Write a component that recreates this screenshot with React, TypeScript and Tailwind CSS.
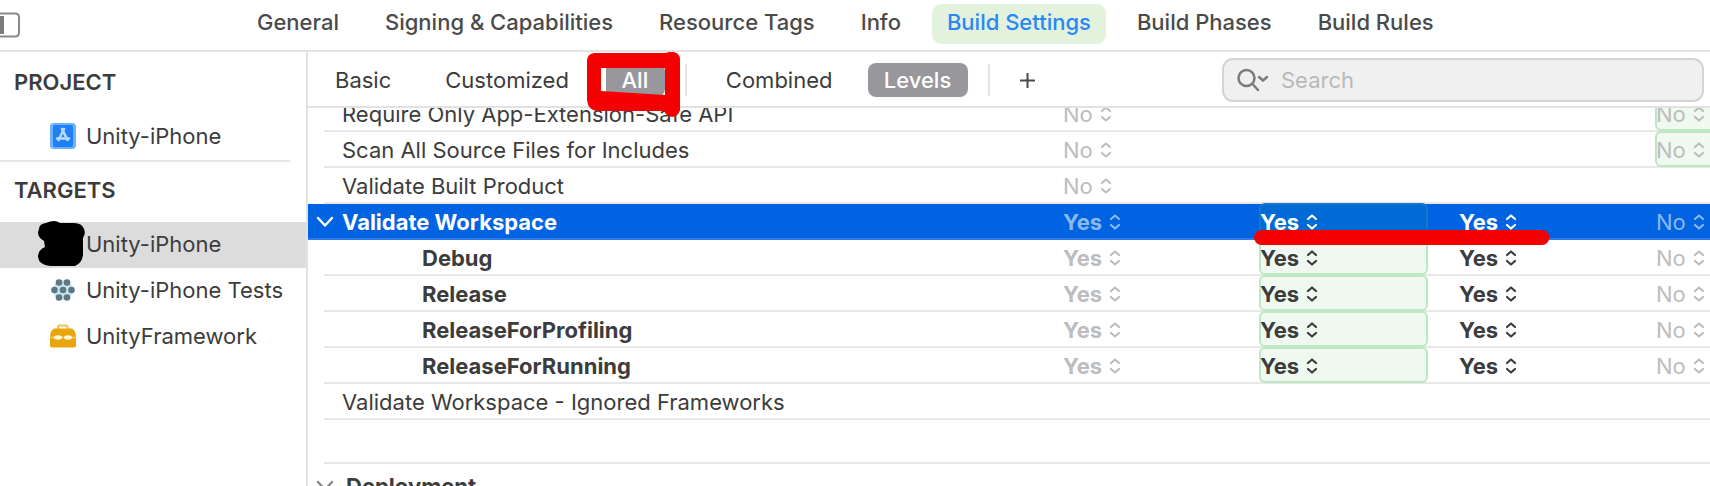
import { useState } from "react";
import clsx from "clsx";

const tabs = [
  "General",
  "Signing & Capabilities",
  "Resource Tags",
  "Info",
  "Build Settings",
  "Build Phases",
  "Build Rules",
];

type Row = {
  name: string;
  values: string[];
  kind?: "selected" | "child";
  // index of the column that has the green "resolved" box
  green?: number;
};

const rows: Row[] = [
  { name: "Require Only App-Extension-Safe API", values: ["No", "", "", "No"], green: 3 },
  { name: "Scan All Source Files for Includes", values: ["No", "", "", "No"], green: 3 },
  { name: "Validate Built Product", values: ["No", "", "", ""] },
  { name: "Validate Workspace", values: ["Yes", "Yes", "Yes", "No"], kind: "selected", green: 1 },
  { name: "Debug", values: ["Yes", "Yes", "Yes", "No"], kind: "child", green: 1 },
  { name: "Release", values: ["Yes", "Yes", "Yes", "No"], kind: "child", green: 1 },
  { name: "ReleaseForProfiling", values: ["Yes", "Yes", "Yes", "No"], kind: "child", green: 1 },
  { name: "ReleaseForRunning", values: ["Yes", "Yes", "Yes", "No"], kind: "child", green: 1 },
  { name: "Validate Workspace - Ignored Frameworks", values: ["", "", "", ""] },
];

const columns = ["Resolved", "Unity-iPhone target", "Unity-iPhone project", "iOS Default"];

function ChevronDown() {
  return (
    <svg width="18" height="12" viewBox="0 0 18 12" fill="none" stroke="currentColor" strokeWidth="2.4" strokeLinecap="round" strokeLinejoin="round">
      <path d="M2 2 L9 9.5 L16 2" />
    </svg>
  );
}

function ProjectIcon() {
  return (
    <svg className="shrink-0" width="28" height="28" viewBox="0 0 28 28" fill="none">
      <rect x="1" y="1" width="26" height="26" rx="4" fill="#6db0fb" />
      <rect x="4" y="3" width="20" height="22" rx="2" fill="#1f7ff5" />
      <g stroke="#b9d9ff" strokeWidth="2.6" strokeLinecap="round">
        <path d="M13 7 L18.500 18" />
        <path d="M15 7 L9.500 18" />
        <path d="M8 16.500 H20" />
      </g>
    </svg>
  );
}

function TestsIcon() {
  const dots = [
    [9, 4.5], [17, 4.5],
    [4.5, 12], [13, 12], [21.5, 12],
    [9, 19.5], [17, 19.5],
  ];
  return (
    <svg className="shrink-0" width="26" height="24" viewBox="0 0 26 24">
      <circle cx="13" cy="12" r="10" fill="#cfe3ec" />
      {dots.map(([cx, cy]) => (
        <circle key={`${cx}-${cy}`} cx={cx} cy={cy} r="3.3" fill="#5b7885" />
      ))}
    </svg>
  );
}

function FrameworkIcon() {
  return (
    <svg className="shrink-0" width="28" height="24" viewBox="0 0 28 24">
      <path d="M9 5 V3 Q9 1.500 10.500 1.500 H17 Q18.500 1.500 18.500 3 V5" fill="none" stroke="#f0c04d" strokeWidth="2" />
      <path d="M5 4.500 H23 Q26.500 6.500 27 12 V21.500 Q27 23.500 25 23.500 H3 Q1 23.500 1 21.500 V12 Q1.500 6.500 5 4.500 Z" fill="#e9a60c" />
      <path d="M1 13.500 H27" stroke="#f3cd6b" strokeWidth="1.500" />
      <ellipse cx="9" cy="13.500" rx="4" ry="2.200" fill="#fff6dc" />
      <ellipse cx="19" cy="13.500" rx="4" ry="2.200" fill="#fff6dc" />
    </svg>
  );
}

// App icon painted over with a black marker
function RedactedIcon() {
  return (
    <svg className="shrink-0" width="50" height="46" viewBox="0 0 50 46">
      <path
        d="M1 8 Q1 3 8 2 Q12 0 16 0 Q19 0 22 2 L36 2 Q44 2 46 8 Q48 13 45 17 L45 34 Q44 42 37 45 L12 45 Q1 44 0 36 Q0 29 7 26 L6 20 Q0 17 0 11 Z"
        fill="#000"
      />
    </svg>
  );
}

function Setting({ value, label, bold, color }: { value: string; label: string; bold: boolean; color: string }) {
  return (
    <div className={clsx("flex items-center gap-[7px]", color)}>
      <select
        aria-label={label}
        defaultValue={value}
        className={clsx("field-sizing-content appearance-none bg-transparent leading-7 outline-none", bold && "font-bold")}
      >
        <option>Yes</option>
        <option>No</option>
      </select>
      <svg className="pointer-events-none shrink-0" width="12" height="16" viewBox="0 0 12 16" fill="none" stroke="currentColor" strokeWidth="2.2" strokeLinecap="round" strokeLinejoin="round">
        <path d="M2 5 L6 1.500 L10 5" />
        <path d="M2 11 L6 14.500 L10 11" />
      </svg>
    </div>
  );
}

function SettingRow({ row }: { row: Row }) {
  const selected = row.kind === "selected";
  const bold = selected || row.kind === "child";
  const line = selected ? "border-b-2 border-[#2f7ae5]" : "border-b-2 border-[#e8e8e8]";

  return (
    <tr className={clsx("h-9", selected ? "bg-[#0063e1] text-white" : "text-[#3c3c3c]")}>
      <td className={clsx("p-0", selected && line)} />
      <th scope="row" className={clsx("p-0 text-left", line, bold ? "font-bold" : "font-normal")}>
        <div className={clsx("flex items-center whitespace-nowrap pt-0.5", row.kind === "child" ? "pl-[98px]" : !selected && "pl-[18px]")}>
          {selected && (
            <button aria-label="Collapse Validate Workspace" className="-ml-2 mr-2 shrink-0">
              <ChevronDown />
            </button>
          )}
          {row.name}
        </div>
      </th>
      {row.values.map((value, i) => {
        const faded = i === 0 || i === 3;
        const color = selected
          ? faded ? "text-[#8ab8f5]" : "text-white"
          : faded ? "text-[#bdbdbd]" : "text-[#3c3c3c]";
        const green = row.green === i;
        return (
          <td key={columns[i]} className={clsx("relative p-0", line)}>
            {value && (
              <div
                className={clsx(
                  "flex h-[34px] items-center pt-0.5",
                  green && "rounded-[5px] outline-2 -outline-offset-1",
                  green && i === 1 && "mr-8",
                  green && i === 3 && "-mr-2",
                  green && (selected ? "bg-[#006bd6] outline-[#1478c8]" : "bg-[#eff9f0] outline-[#bfe6c5]"),
                )}
              >
                <Setting value={value} label={`${row.name}, ${columns[i]}`} bold={bold && i !== 3} color={color} />
              </div>
            )}
            {selected && i === 1 && (
              <svg className="pointer-events-none absolute -left-[6px] top-[26px] z-10" width="296" height="15" viewBox="0 0 296 15">
                <path d="M7.500 7.500 H288" stroke="#f50000" strokeWidth="15" strokeLinecap="round" />
              </svg>
            )}
          </td>
        );
      })}
    </tr>
  );
}

function Target({ icon, name, selected }: { icon: React.ReactNode; name: string; selected?: boolean }) {
  return (
    <li>
      <button className={clsx("flex h-[46px] w-full items-center whitespace-nowrap pb-0.5 pl-[38px] text-left", selected && "bg-[#dcdcdc]")}>
        <span className="flex w-12 shrink-0 justify-center pl-0.5">{icon}</span>
        {name}
      </button>
    </li>
  );
}

export default function App() {
  const [tab, setTab] = useState("Build Settings");

  return (
    <div className="flex h-screen flex-col overflow-hidden bg-white font-['Inter','Liberation_Sans',sans-serif] text-[22px] leading-7 text-[#3c3c3c]">
      {/* Editor tabs */}
      <header className="flex h-[52px] shrink-0 items-start border-b-2 border-[#e2e2e2]">
        <button aria-label="Toggle sidebar" className="mt-3 w-[242px] shrink-0">
          <svg width="21" height="26" viewBox="0 0 21 26" fill="none">
            <path d="M0 1.500 H15 Q19 1.500 19 5.500 V20.500 Q19 24.500 15 24.500 H0" stroke="#8a8a8a" strokeWidth="2" />
            <path d="M0 4 H4 V22 H0 Z" fill="#7c7c7c" />
          </svg>
        </button>
        <nav className="mt-1 flex gap-4">
          {tabs.map((name) => (
            <button
              key={name}
              onClick={() => setTab(name)}
              className={clsx(
                "h-10 whitespace-nowrap rounded-[9px] px-[15px] pb-1 font-medium",
                tab === name ? "bg-[#e3f2dd] text-[#2a87f7]" : "text-[#4a4a4a]",
              )}
            >
              {name}
            </button>
          ))}
        </nav>
      </header>

      <div className="flex min-h-0 flex-1">
        {/* Project and targets */}
        <aside className="w-[308px] shrink-0 border-r-2 border-[#e2e2e2]">
          <h2 className="flex h-[62px] items-center pb-0.5 pl-[14px] font-semibold">PROJECT</h2>
          <ul>
            <Target icon={<ProjectIcon />} name="Unity-iPhone" />
          </ul>
          <hr className="mr-4 border-t-2 border-[#e6e6e6]" />
          <h2 className="flex h-[60px] items-center pb-1 pl-[14px] font-semibold">TARGETS</h2>
          <ul>
            <Target icon={<RedactedIcon />} name="Unity-iPhone" selected />
            <Target icon={<TestsIcon />} name="Unity-iPhone Tests" />
            <Target icon={<FrameworkIcon />} name="UnityFramework" />
          </ul>
        </aside>

        <main className="flex min-w-0 flex-1 flex-col">
          {/* Filter bar */}
          <div className="flex h-14 shrink-0 items-center border-b-2 border-[#e2e2e2] pl-3 pr-[6px] pt-0.5">
            <button className="h-[34px] px-[15px]">Basic</button>
            <button className="ml-6 h-[34px] px-[15px]">Customized</button>
            <div className="relative ml-[21px]">
              <button className="h-[34px] w-[60px] rounded-lg bg-[#98979c] font-medium text-white">All</button>
              <svg className="pointer-events-none absolute -left-[19px] -top-[11px] z-20" width="95" height="66" viewBox="0 0 95 66">
                <path d="M15 16 H20 V41 L15 40 Z" fill="#fff" />
                <path
                  fillRule="evenodd"
                  fill="#f50000"
                  d="M8 1 H80 Q86 -2 92 2 Q94 4 94 8 V58 Q92 65 86 65 Q80 64 78 59 H12 Q2 59 1 48 V9 Q1 2 8 1 Z M15 16 V39 L79 43 V16 Z"
                />
              </svg>
            </div>
            <div className="ml-5 h-8 w-[2px] bg-[#e4e4e4]" />
            <button className="ml-6 h-[34px] px-[15px]">Combined</button>
            <button className="ml-5 h-[34px] w-[100px] rounded-lg bg-[#98979c] font-medium text-white">Levels</button>
            <div className="ml-5 h-8 w-[2px] bg-[#e4e4e4]" />
            <button aria-label="Add build setting" className="ml-[29px]">
              <svg width="17" height="17" viewBox="0 0 17 17" stroke="#4a4a4a" strokeWidth="2">
                <path d="M8.500 1 V16 M1 8.500 H16" />
              </svg>
            </button>
            <label className="ml-auto flex h-11 w-[482px] items-center rounded-[11px] border-2 border-[#d4d4d4] bg-[#f0f0f0] pl-[13px]">
              <svg className="shrink-0" width="32" height="24" viewBox="0 0 32 24" fill="none" stroke="#7b7b7b" strokeWidth="2.5" strokeLinecap="round" strokeLinejoin="round">
                <circle cx="9.500" cy="10" r="8" />
                <path d="M15.500 16 L21 22" />
                <path d="M22 9 L26 12.500 L30 9" />
              </svg>
              <input
                type="search"
                aria-label="Search"
                placeholder="Search"
                className="ml-3 min-w-0 flex-1 bg-transparent outline-none placeholder:text-[#b9b9b9]"
              />
            </label>
          </div>

          {/* Settings list, scrolled a little way down */}
          <div className="min-h-0 flex-1 overflow-hidden">
            <table className="-mt-3 w-full table-fixed border-separate border-spacing-0">
              <colgroup>
                <col className="w-4" />
                <col />
                <col className="w-[197px]" />
                <col className="w-[199px]" />
                <col className="w-[197px]" />
                <col className="w-[54px]" />
              </colgroup>
              <tbody>
                {rows.map((row) => (
                  <SettingRow key={row.name} row={row} />
                ))}
                <tr className="h-11">
                  <td className="p-0" />
                  <td colSpan={5} className="border-b-2 border-[#e8e8e8] p-0" />
                </tr>
                <tr className="h-11">
                  <td className="p-0" />
                  <th scope="rowgroup" colSpan={5} className="p-0 text-left font-bold">
                    <div className="flex items-center">
                      <button aria-label="Collapse Deployment" className="-ml-2 mr-3 text-[#8a8a8a]">
                        <ChevronDown />
                      </button>
                      Deployment
                    </div>
                  </th>
                </tr>
              </tbody>
            </table>
          </div>
        </main>
      </div>
    </div>
  );
}
